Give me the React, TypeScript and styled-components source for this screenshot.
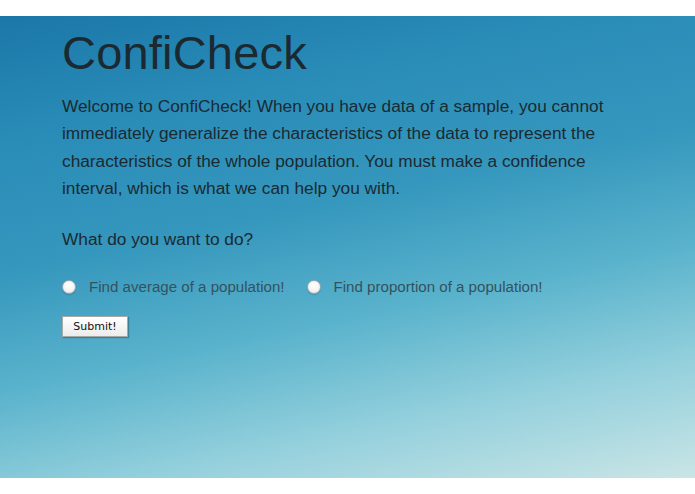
import React from "react";
import styled, { createGlobalStyle } from "styled-components";

const GlobalStyle = createGlobalStyle`
  html, body {
    margin: 0;
    padding: 0;
    background: #ffffff;
  }
`;

const App: React.FC = () => {
  return (
    <>
      <GlobalStyle />
      <Page>
        <Backdrop>
          <Content>
            <Title>ConfiCheck</Title>
            <Intro>
              Welcome to ConfiCheck! When you have data of a sample, you cannot
              immediately generalize the characteristics of the data to represent the
              characteristics of the whole population. You must make a confidence
              interval, which is what we can help you with.
            </Intro>
            <Question>What do you want to do?</Question>
            <form onSubmit={(e) => e.preventDefault()}>
              <Choices>
                <Choice>
                  <Radio type="radio" name="task" value="average" />
                  Find average of a population!
                </Choice>
                <Choice>
                  <Radio type="radio" name="task" value="proportion" />
                  Find proportion of a population!
                </Choice>
              </Choices>
              <SubmitButton type="submit">Submit!</SubmitButton>
            </form>
          </Content>
        </Backdrop>
      </Page>
    </>
  );
};

export default App;

// ===== styled-components =====

const Page = styled.div`
  padding: 16px 0;
  width: 695px;
  height: 494px;
  box-sizing: border-box;
`;

const Backdrop = styled.div`
  height: 462px;
  background: linear-gradient(
    168deg,
    #1b77a8 0%,
    #2a8db8 22%,
    #3597bd 42%,
    #5ab3cc 62%,
    #92cfdc 80%,
    #c9e5e6 100%
  );
`;

const Content = styled.div`
  padding: 9px 0 0 62px;
  font-family: "Liberation Sans", Arial, sans-serif;
  color: #1b2a31;
`;

const Title = styled.h1`
  font-size: 47px;
  font-weight: 400;
  margin: 0;
  line-height: 56px;
  letter-spacing: 0.2px;
`;

const Intro = styled.p`
  font-size: 17.3px;
  line-height: 27.3px;
  margin: 12px 0 0;
  width: 560px;
`;

const Question = styled.p`
  font-size: 17.3px;
  margin: 27px 0 0;
  line-height: 20px;
`;

const Choices = styled.div`
  display: flex;
  gap: 22px;
  margin-top: 29px;
`;

const Choice = styled.label`
  display: flex;
  align-items: center;
  gap: 13px;
  font-size: 15.1px;
  color: #35525d;
`;

const Radio = styled.input`
  appearance: none;
  margin: 0;
  width: 14px;
  height: 14px;
  border-radius: 50%;
  background: radial-gradient(circle at 50% 35%, #ffffff 0%, #f3f3f3 60%, #d8d8d8 100%);
  border: 1px solid #9aa9ae;
  box-shadow: 0 1px 1px rgba(0, 0, 0, 0.15);
`;

const SubmitButton = styled.button`
  display: block;
  margin-top: 21px;
  width: 66px;
  height: 21px;
  padding: 0;
  font-family: "DejaVu Sans", sans-serif;
  font-size: 11px;
  color: #111;
  background: linear-gradient(#ffffff, #ececec);
  border: 1px solid #a8a8a8;
  border-radius: 0;
  box-shadow: 1px 1px 1px rgba(0, 0, 0, 0.25);
`;
